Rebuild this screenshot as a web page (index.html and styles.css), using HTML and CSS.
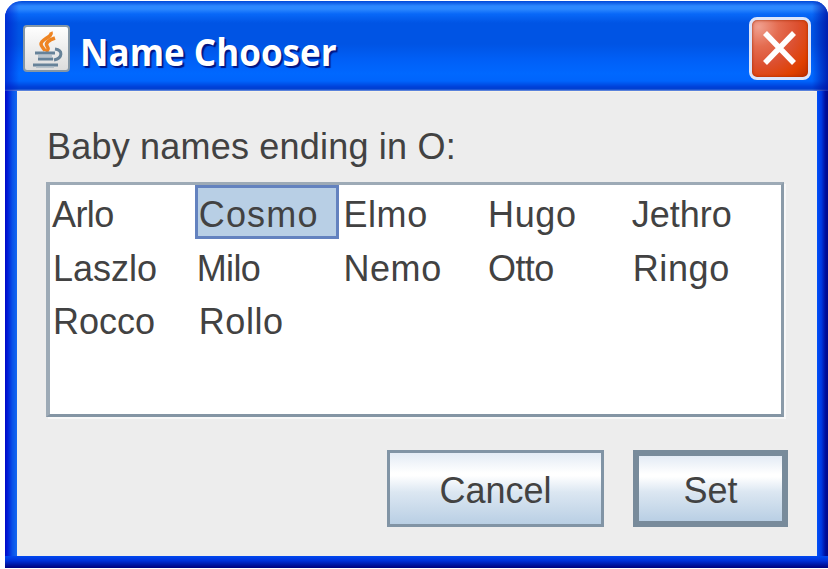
FILE: index.html
```html
<!DOCTYPE html>
<html lang="en">
<head>
<meta charset="utf-8">
<title>Name Chooser</title>
<link rel="stylesheet" href="styles.css">
</head>
<body>
<div class="window">
  <header class="titlebar">
    <svg class="java" viewBox="0 0 47 47">
      <defs><linearGradient id="tile" x2="0" y2="1"><stop offset="0" stop-color="#fff"/><stop offset="1" stop-color="#dcdcdc"/></linearGradient></defs>
      <rect x="1" y="1" width="45" height="45" rx="3" fill="url(#tile)" stroke="#8597a6" stroke-width="2"/>
      <g fill="none">
        <path d="M28 7c2 5-10 7-10 12 0 3 3 4 4 7M32 13c-6 2-10 5-8 8s1 4-1 6" stroke="#ee8422" stroke-width="3.500"/>
        <path d="M12 28h20M15 34h15M32 24c8 1 8 9-1 11M10 40h25" stroke="#668299" stroke-width="3"/>
        <path d="M15 31h14M13 42h18" stroke="#a9b8c4" stroke-width="1.500"/>
      </g>
    </svg>
    <h1 class="title">Name Chooser</h1>
    <button class="close" aria-label="Close"><svg viewBox="0 0 56 57"><path d="M13 13L42 43M42 13L13 43" stroke="#fff" stroke-width="5.500"/></svg></button>
  </header>
  <main class="panel">
    <p class="label">Baby names ending in O:</p>
    <div class="list">
      <span class="tight">Arlo</span><span class="selected">Cosmo</span><span class="wide">Elmo</span><span class="wide">Hugo</span><span>Jethro</span>
      <span>Laszlo</span><span class="tight">Milo</span><span class="wide">Nemo</span><span class="tight otto">Otto</span><span class="wide">Ringo</span>
      <span>Rocco</span><span class="wide">Rollo</span>
    </div>
    <div class="actions">
      <button class="button cancel">Cancel</button>
      <button class="button set">Set</button>
    </div>
  </main>
</div>
</body>
</html>
```
FILE: styles.css
```css
* { box-sizing: border-box; }
body {
  margin: 0;
  width: 828px;
  height: 569px;
  overflow: hidden;
  background: #fff;
  padding: 1px 0 0 5px;
  font-family: "Liberation Sans", Arial, sans-serif;
  font-size: 36px;
  color: #424242;
}
.window {
  width: 823px;
  height: 567px;
  border-radius: 17px 15px 0 0;
  overflow: hidden;
  display: grid;
  grid-template: 90px 465px 12px / 12px 800px 11px;
  background:
    linear-gradient(#0048f0, #0030d8 40%, #000c90 85%, #000080) 0 100% / 100% 12px no-repeat,
    linear-gradient(90deg, #0008c8, #0020d8 25%, #0850e8 60%, #1468f0) 0 0 / 12px 100% no-repeat,
    linear-gradient(90deg, #0050f8, #0038e0 40%, #0010a0 75%, #000888) 100% 0 / 11px 100% no-repeat;
}
.titlebar {
  grid-column: 1 / -1;
  display: flex;
  align-items: center;
  padding: 5px 17px 0 18px;
  background:
    linear-gradient(90deg, #0018c8aa, #0030d800 14px, #0030d800 calc(100% - 16px), #0010a0cc),
    linear-gradient(#0048d8, #2c88ff 5px, #2c88ff 8px, #0868f8 13px, #0054e4 22px, #0054e4 43px, #0060f8 60px, #0068ff 73px, #0064fc 80px, #0040d8 86px, #0040d0 88px, #7898e0 90px);
}
.java { width: 47px; height: 47px; flex: none; }
.title {
  margin: 5px auto 0 10px;
  font: bold 38px/50px "Open Sans", "Noto Sans", sans-serif;
  color: #fff;
  text-shadow: 2px 2px 1px #001684;
  white-space: nowrap;
  transform: scaleX(.922);
  transform-origin: 0 50%;
}
.close {
  width: 62px;
  height: 63px;
  padding: 0;
  border: 3px solid #dce4fa;
  border-radius: 8px;
  background: radial-gradient(circle at 12% 12%, #f0a090, #e46c50 28%, #dc5030 55%, #e04000 80%, #c03000);
  box-shadow: inset 0 0 3px #a02800;
}
.close svg { display: block; width: 56px; height: 57px; }
.panel {
  grid-column: 2;
  padding: 35px 30px 0 29px;
  background: #ededed;
  border-top: 1px solid #f7f3e8;
}
.label { margin: 0; padding-left: 1px; line-height: 40px; height: 55px; letter-spacing: .2px; }
.list {
  width: 738px;
  height: 235px;
  display: grid;
  grid-template-columns: repeat(5, 144.700px);
  grid-auto-rows: 53.700px;
  align-content: start;
  background: #fff;
  border: 3px solid #9daab6;
  border-left-width: 4px;
  border-right-color: #8b9ba9;
  border-bottom-color: #8495a4;
  box-shadow: 2px 2px 0 #f8f8f8;
}
.list span { padding-left: 3px; line-height: 59px; }
.list .tight { padding-left: 2px; letter-spacing: -.6px; }
.list .otto { padding-left: 4px; }
.list .wide { padding-left: 4px; letter-spacing: .6px; }
.list .selected {
  padding-left: 1px;
  line-height: 53px;
  letter-spacing: 1.200px;
  background: #b8cfe5;
  border: 3px solid #6382bf;
}
.actions { display: flex; justify-content: flex-end; gap: 29px; margin: 33px -1px 0 0; }
.button {
  height: 77px;
  padding: 5px 0 0;
  font: inherit;
  color: inherit;
  border: 3px solid #8194a5;
  background: linear-gradient(#e3ebf5, #fff 28%, #fff 32%, #dce7f2 55%, #b9cfe4);
}
.cancel { width: 217px; }
.set { width: 155px; border: 6px solid #788b9b; }
```
